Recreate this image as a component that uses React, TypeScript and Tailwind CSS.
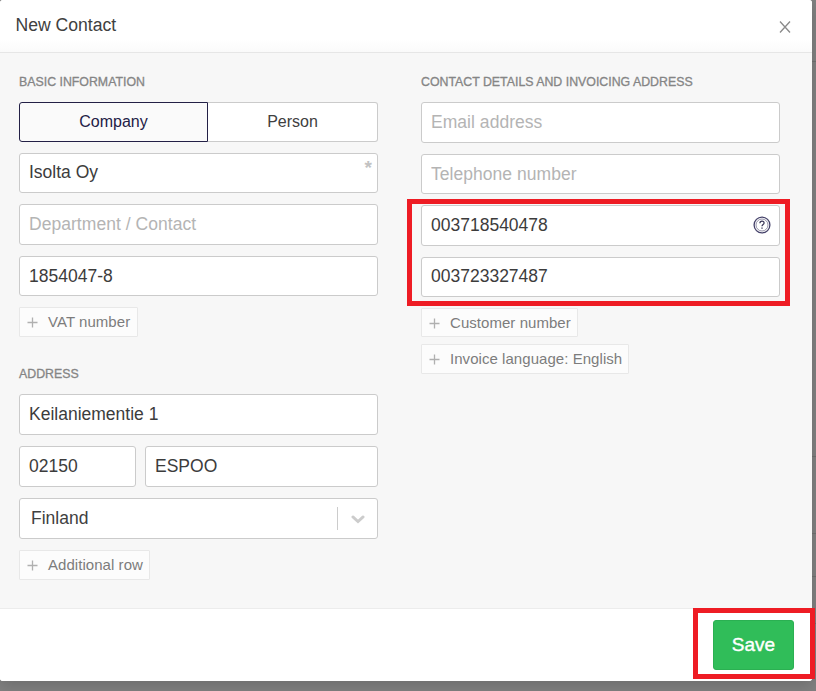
import clsx from 'clsx';

interface FieldProps {
    label: string;
    value?: string;
    className?: string;
    inputClassName?: string;
    children?: React.ReactNode;
}

function Field({ label, value, className, inputClassName = 'pb-0', children }: FieldProps) {
    return (
        <div className={clsx('relative flex rounded-[3px] border border-[#cbcbcb] bg-white', className)}>
            <input
                type="text"
                defaultValue={value}
                placeholder={label}
                className={clsx(
                    'w-full min-w-0 bg-transparent px-[9px] text-[17.5px] text-[#3c3c3c] outline-none placeholder:text-[#b4b4b4] placeholder-shown:tracking-[0.04px]',
                    inputClassName,
                )}
            />
            {children}
        </div>
    );
}

function SectionTitle({ children }: { children: React.ReactNode }) {
    return (
        <h2 className="h-[14px] text-[12.35px] leading-[14px] whitespace-nowrap text-[#858585] [-webkit-text-stroke:0.3px_#858585]">
            {children}
        </h2>
    );
}

function AddButton({ children, className }: { children: React.ReactNode; className?: string }) {
    return (
        <button
            type="button"
            className={clsx(
                'flex items-center rounded-[1px] border border-[#e8e8e8] bg-[#fcfcfc] pl-[7px] text-[15px] tracking-[0.05px] whitespace-nowrap text-[#7c7c7c]',
                className,
            )}
        >
            <svg width="11" height="11" viewBox="0 0 11 11" className="mr-[10px] shrink-0">
                <path d="M5.5 0.5V10.5M0.5 5.5H10.5" stroke="#b0b0b0" strokeWidth="1.3" fill="none" />
            </svg>
            {children}
        </button>
    );
}

function HelpIcon() {
    return (
        <svg width="18" height="18" viewBox="0 0 18 18" fill="none" className="absolute top-[10px] right-[8px]">
            <circle cx="9" cy="9" r="7.9" stroke="#45426a" strokeWidth="1.3" />
            <circle cx="9" cy="9" r="6" stroke="#8a88a0" strokeWidth="0.9" />
            <path d="M6.9 7.3C6.9 5.9 7.8 5.2 9 5.2C10.2 5.2 11.1 5.9 11.1 7.1C11.1 8.5 9 8.6 9 10.2" stroke="#3a3759" strokeWidth="1.2" />
            <path d="M9 11.4V12.7" stroke="#3a3759" strokeWidth="1.3" />
        </svg>
    );
}

export default function App() {
    return (
        <div className="relative h-[691px] w-[816px] overflow-hidden bg-[#808080] font-['Liberation_Sans',Arial,sans-serif]">
            {/* Page rows behind the dialog */}
            <div className="absolute top-0 right-0 h-full w-1">
                <div className="h-[62px] border-b border-[#707070]" />
                <div className="h-[395px] border-b border-[#707070]" />
                <div className="h-[77px] border-b border-[#707070]" />
                <div className="h-[43px] border-b border-[#707070]" />
                <div className="h-[47px] border-b border-[#707070]" />
            </div>

            <div className="relative flex h-[681px] w-[812px] flex-col rounded-[3px] bg-white shadow-[0_5px_15px_rgba(0,0,0,0.15)]">
                <header className="flex h-[53px] shrink-0 items-center justify-between rounded-t-[3px] border-b border-[#e6e6e6] bg-linear-to-b from-white from-75% to-[#fafafa] pr-[21px] pl-[15.5px]">
                    <h1 className="pb-[2px] text-[17.6px] text-[#404040]">New Contact</h1>
                    <button type="button" aria-label="Close" className="pt-px">
                        <svg width="12" height="12" viewBox="0 0 12 12" fill="none">
                            <path d="M1 0.5L11 11.5M11 0.5L1 11.5" stroke="#8a8a8a" strokeWidth="1.3" />
                        </svg>
                    </button>
                </header>

                <main className="flex h-[555px] shrink-0 gap-[43px] bg-[#f7f7f7] pt-[22px] pl-[19px]">
                    <section className="flex w-[359px] flex-col items-stretch">
                        <SectionTitle>BASIC INFORMATION</SectionTitle>
                        <div className="mt-[13px] flex h-10 text-[16px] text-[#404040]">
                            <button
                                type="button"
                                className="w-[189px] rounded-l-[3px] border border-[#232046] bg-[#fafafa] text-[#232046]"
                            >
                                Company
                            </button>
                            <button
                                type="button"
                                className="flex-1 rounded-r-[3px] border border-l-0 border-[#cbcbcb] bg-white"
                            >
                                Person
                            </button>
                        </div>
                        <Field label="Company name" value="Isolta Oy" className="mt-[11px] h-10" inputClassName="pb-[2px]">
                            <span className="absolute top-[4px] right-[5px] text-[19px] leading-[20px] font-bold text-[#c2c2c2]">*</span>
                        </Field>
                        <Field label="Department / Contact" className="mt-[11px] h-[41px]" />
                        <Field label="Business ID" value="1854047-8" className="mt-[11px] h-10" />
                        <AddButton className="mt-[11px] h-[30px] w-[119px]">VAT number</AddButton>

                        <div className="mt-[30px]">
                            <SectionTitle>ADDRESS</SectionTitle>
                        </div>
                        <Field label="Street address" value="Keilaniementie 1" className="mt-[13px] h-[41px]" />
                        <div className="mt-[11px] flex gap-[9px]">
                            <Field label="Zip" value="02150" className="h-[41px] w-[117px]" />
                            <Field label="City" value="ESPOO" className="h-[41px] flex-1" />
                        </div>
                        <div className="mt-[11px] flex h-[41px] items-center rounded-[3px] border border-[#cbcbcb] bg-white pl-[11px]">
                            <span className="flex-1 text-[17.5px] text-[#404040]">Finland</span>
                            <span className="h-[23px] w-px bg-[#cccccc]" />
                            <svg width="14" height="9" viewBox="0 0 14 9" fill="none" className="mt-px mr-[12px] ml-[13px]">
                                <path d="M1.9 1.9L7 6.5L12.1 1.9" stroke="#cccccc" strokeWidth="2.8" strokeLinecap="round" />
                            </svg>
                        </div>
                        <AddButton className="mt-[11px] h-[30px] w-[131px]">Additional row</AddButton>
                    </section>

                    <section className="flex w-[359px] flex-col">
                        <SectionTitle>CONTACT DETAILS AND INVOICING ADDRESS</SectionTitle>
                        <Field label="Email address" className="mt-[13px] h-[41px]" />
                        <Field label="Telephone number" className="mt-[11px] h-10" />
                        <Field label="E-invoice address" value="003718540478" className="mt-[11px] h-[41px]">
                            <HelpIcon />
                        </Field>
                        <Field label="E-invoice operator" value="003723327487" className="mt-[11px] h-10" inputClassName="pb-[2px]" />
                        <AddButton className="mt-[11px] h-[29px] w-[157px] pt-px">Customer number</AddButton>
                        <AddButton className="mt-[7px] h-[30px] w-[208px]">Invoice language: English</AddButton>
                    </section>
                </main>

                <footer className="flex flex-1 justify-end rounded-b-[3px] border-t border-[#ececec] bg-white pt-[11px] pr-[18px]">
                    <button
                        type="button"
                        className="h-[50px] w-[81px] rounded-[3px] border border-[#2bb052] bg-[#30bd59] text-[19px] text-white [-webkit-text-stroke:0.4px_white]"
                    >
                        Save
                    </button>
                </footer>
            </div>

            {/* Highlight frames */}
            <div className="pointer-events-none absolute top-[199px] left-[407px] h-[107px] w-[383px] border-[5px] border-[#ee1c24]" />
            <div className="pointer-events-none absolute top-[608px] left-[693px] h-[71px] w-[122px] border-[5px] border-[#ee1c24]" />
        </div>
    );
}
